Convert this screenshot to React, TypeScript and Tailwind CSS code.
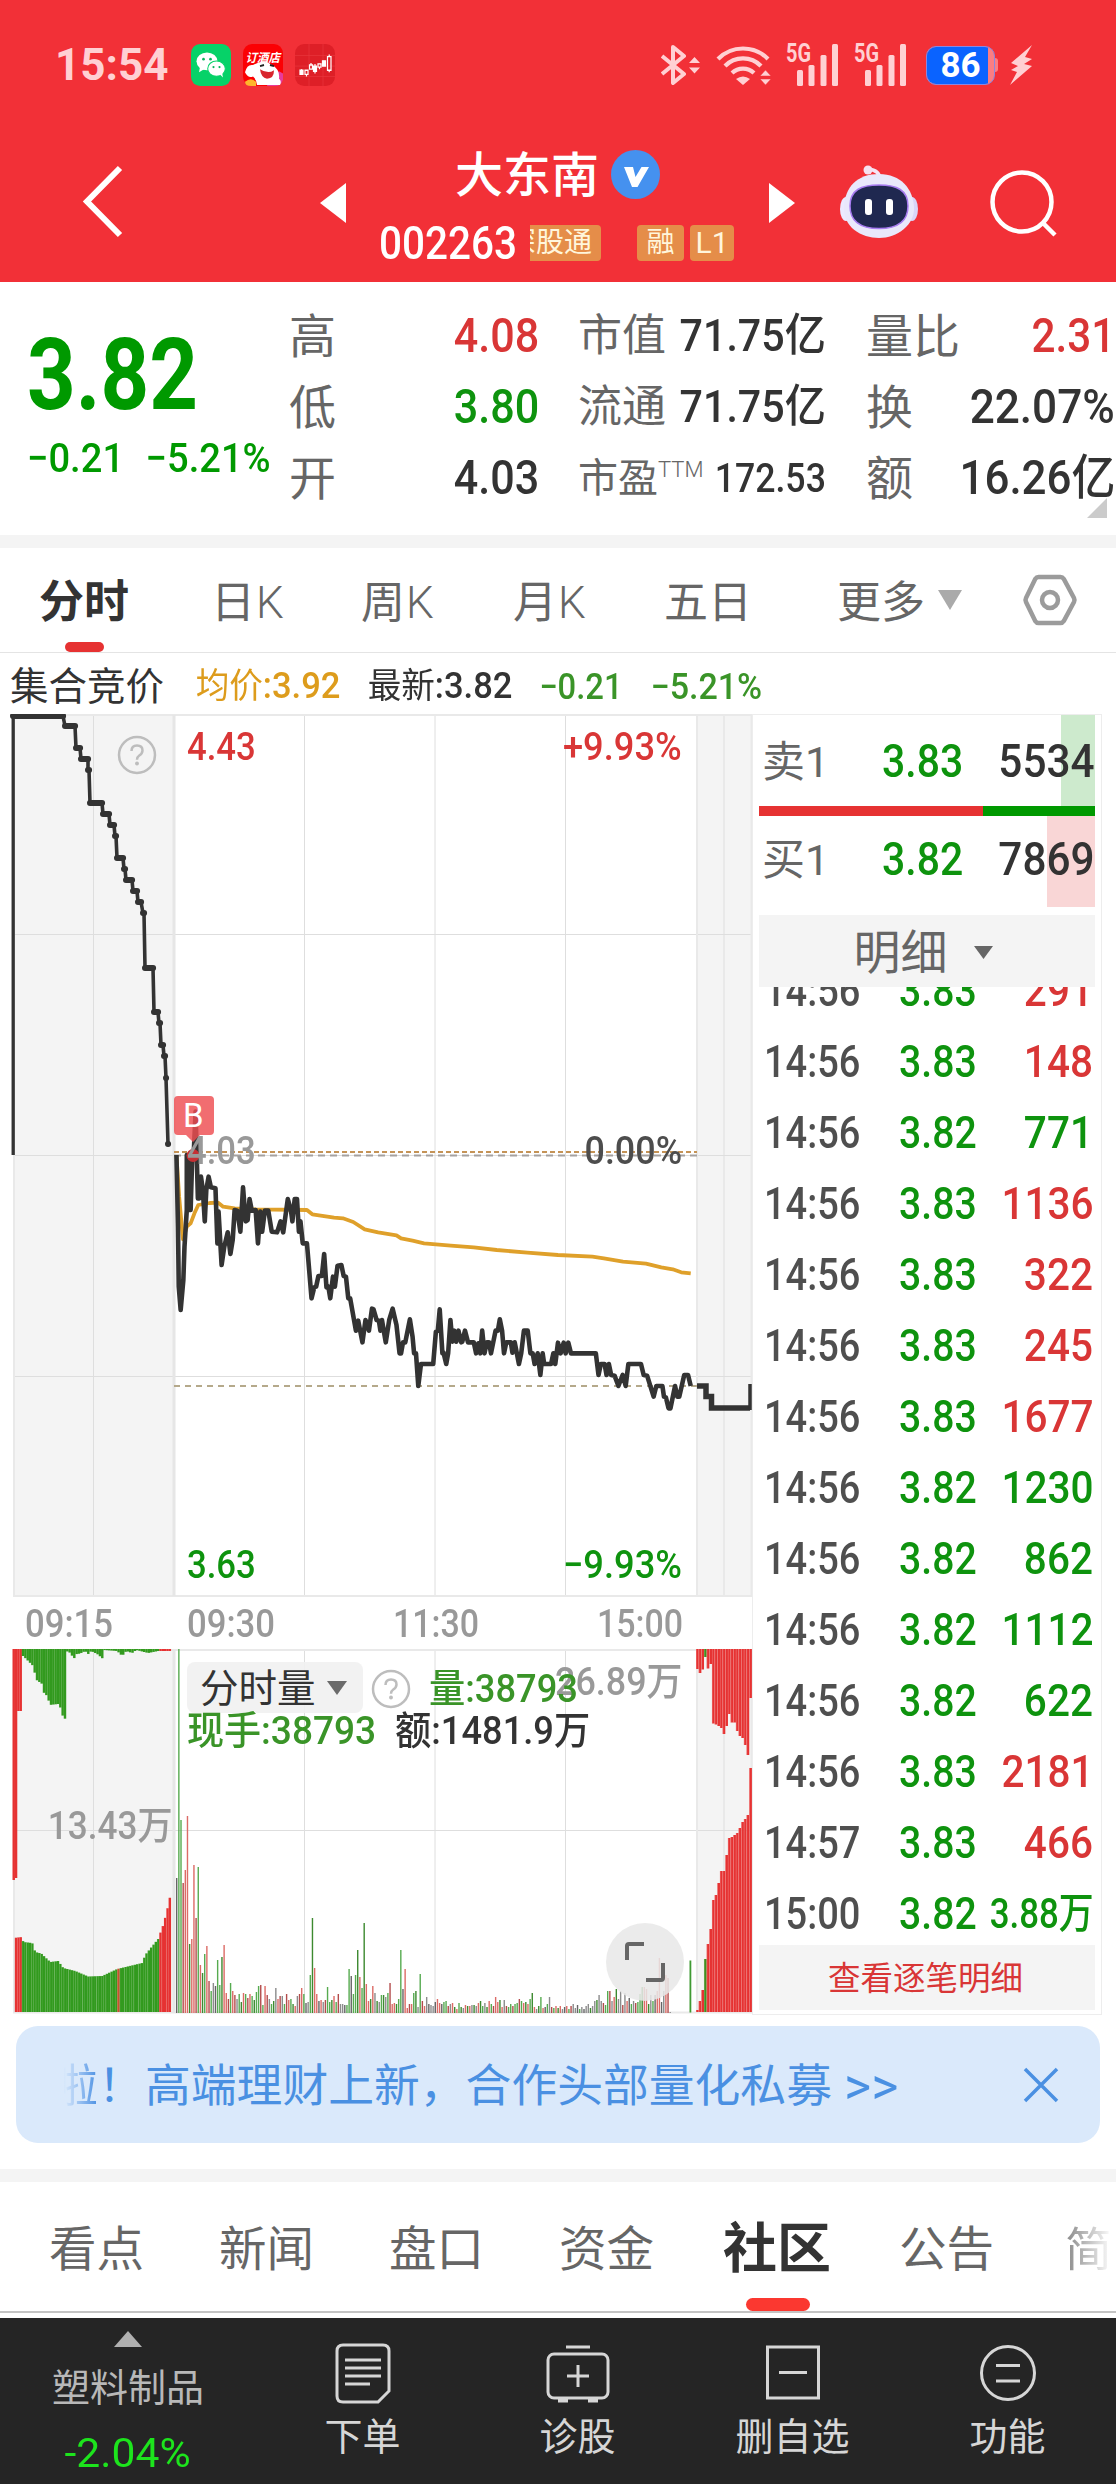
import React from "react";

const FONT = "font-['Roboto','Noto_Sans_CJK_SC',sans-serif]";

/* ---------- header ---------- */

function Signal() {
  return (
    <svg width="54" height="42" viewBox="0 0 54 42" fill="#ffd0d3" className="overflow-visible">
      <text x="0" y="18" fontSize="25" fontWeight="700" textLength="25" lengthAdjust="spacingAndGlyphs">
        5G
      </text>
      <rect x="11" y="26" width="6" height="16" rx="1.5" />
      <rect x="22.500" y="21" width="6" height="21" rx="1.5" />
      <rect x="34.500" y="11" width="6" height="31" rx="1.5" />
      <rect x="46" y="0" width="6" height="42" rx="1.5" />
    </svg>
  );
}

function StatusBar() {
  return (
    <div className="flex h-[130px] items-center pl-[55px]">
      <span className="w-[136px] text-[44px] leading-none font-bold text-[#ffd0d3]">15:54</span>
      <svg width="40" height="42" viewBox="0 0 40 40" preserveAspectRatio="none" className="mr-3">
        <rect width="40" height="40" rx="9" fill="#06d268" />
        <ellipse cx="16" cy="16.500" rx="10.500" ry="8.500" fill="#fff" />
        <path d="M9 22l-1 5 5-3z" fill="#fff" />
        <ellipse cx="25.500" cy="23.500" rx="8.800" ry="7.300" fill="#fff" stroke="#06d268" strokeWidth="1" />
        <path d="M29 29l3 3-1-5z" fill="#fff" />
        <circle cx="12.500" cy="14.500" r="1.300" fill="#06b55a" />
        <circle cx="19.500" cy="14.500" r="1.300" fill="#06b55a" />
        <circle cx="22.500" cy="22" r="1.100" fill="#06b55a" />
        <circle cx="28.500" cy="22" r="1.100" fill="#06b55a" />
      </svg>
      <svg width="40" height="42" viewBox="0 0 40 40" preserveAspectRatio="none" className="mr-3">
        <rect width="40" height="40" rx="9" fill="#fb0004" />
        <path d="M24 40q2-10 12-14l4 2v6q-2 6-8 6z" fill="#e83a9b" />
        <path d="M2 27q2-8 8-7q11-6 19 0q8 4 7 13q3 2 1 6H14q-1-6-4-8q-5 2-8-4z" fill="#fff" />
        <path d="M17 24q8 5 14 1q0 8-7 8q-6-1-7-9z" fill="#d8262d" />
        <path d="M17 21l4-1M27 20l4 1" stroke="#222" strokeWidth="1.800" />
        <path d="M2 36q6-5 11 0v4H8q-6 0-6-4z" fill="#ffb52c" />
        <text x="2.500" y="17.500" fontSize="11.500" fontWeight="700" fontStyle="italic" fill="#fff">
          订酒店
        </text>
      </svg>
      <svg width="40" height="42" viewBox="0 0 40 40" preserveAspectRatio="none">
        <rect width="40" height="40" rx="9" fill="#de1f27" />
        <path d="M0 11h40M0 21h40M0 31h40M14 0v40M28 0v40" stroke="#ea3a40" strokeWidth=".6" />
        <g fill="#fff" stroke="#fff" strokeWidth="1.200">
          <path d="M5 25h3v4H5zM18.500 21h3v5h-3zM27.500 16h3v5h-3z" />
          <path d="M10 25h3v4h-3zM14.500 20h3v4h-3zM23 19h3v3h-3zM32.500 12h3.500v13h-3.500z" fill="none" />
          <path d="M6.500 24v1M11.500 29v2M16 18v2M20 19v9M24.500 22v2M34.200 10v2M34.200 25v2" />
        </g>
      </svg>

      <div className="ml-[326px] flex items-center">
        <svg width="39" height="42" viewBox="0 0 39 42" fill="none" stroke="#ffd0d3" strokeWidth="4">
          <path d="M1 12l22 18-11 9V3l11 9L1 30" strokeLinejoin="round" />
          <path d="M28 19l5.500-6 5.500 6zM28 23.500l5.500 6 5.500-6z" fill="#ffd0d3" stroke="none" />
        </svg>
        <svg width="56" height="42" viewBox="0 0 56 42" fill="none" stroke="#ffd0d3" strokeWidth="4.200" className="ml-4">
          <path d="M2 15a35 35 0 0 1 50 0" />
          <path d="M9 22a25 25 0 0 1 36 0" />
          <path d="M16 29a16 16 0 0 1 22 0" />
          <path d="M20 35q7-5 14 0l-7 6z" fill="#ffd0d3" stroke="none" />
          <path d="M44 32l5.500-6 5.500 6zM44 35l5.500 6 5.500-6z" fill="#ffd0d3" stroke="#f23037" strokeWidth=".5" />
        </svg>
        <div className="ml-[14px] flex gap-[14px]">
          <Signal />
          <Signal />
        </div>
        <div className="relative ml-[18px] flex h-[39px] w-[69px] items-center justify-center overflow-hidden rounded-[10px] border border-[#8a86e0] bg-[#fb7d82]">
          <div className="absolute inset-y-0 left-0 w-[61px] bg-[#0a63ff]" />
          <span className="relative text-[35px] leading-none font-bold text-white">86</span>
        </div>
        <div className="h-[14px] w-[3px] rounded-r bg-[#fb7d82]" />
        <svg width="24" height="42" viewBox="0 0 24 42" className="ml-[11px]" fill="#ffd0d3">
          <path d="M23 1L2 19l7 3-7 4 6 2-7 13 22-19-8-2 8-5-7-2z" />
        </svg>
      </div>
    </div>
  );
}

function NavBar() {
  return (
    <div className="flex h-[152px] items-start text-white">
      <svg width="46" height="76" viewBox="0 0 46 76" className="mt-[33px] ml-[80px]" fill="none" stroke="#fff" strokeWidth="6">
        <path d="M40 5L7 38.500 40 72" />
      </svg>
      <svg width="26" height="40" viewBox="0 0 26 40" className="mt-[53px] ml-[194px]" fill="#fff">
        <path d="M26 0v40L0 20z" />
      </svg>
      <div className="ml-[33px] w-[360px]">
        <div className="flex h-[88px] items-center pl-[76px]">
          <span className="relative top-[2px] text-[48px] leading-none font-medium">大东南</span>
          <svg width="49" height="49" viewBox="0 0 49 49" className="ml-[12px]">
            <circle cx="24.500" cy="24.500" r="24.500" fill="#4591ef" />
            <path d="M13 17h9l2.500 10 6-10H38L26.500 37H21z" fill="#fff" />
          </svg>
        </div>
        <div className="flex h-[50px] items-center text-[#fff6dc]">
          <span className="w-[151px] origin-left scale-x-[.88] text-[46px] leading-none font-medium text-white">002263</span>
          <span className="flex h-[36px] w-[71px] items-center justify-end overflow-hidden rounded-r-[4px] bg-[#e58d49] pr-[9px] text-[28px] leading-none whitespace-nowrap">
            深股通
          </span>
          <span className="ml-[36px] flex h-[36px] w-[47px] items-center justify-center rounded-[4px] bg-[#e58d49] text-[28px] leading-none">融</span>
          <span className="ml-[6px] flex h-[36px] w-[44px] items-center justify-center rounded-[4px] bg-[#e58d49] text-[30px] leading-none">L1</span>
        </div>
      </div>
      <svg width="26" height="40" viewBox="0 0 26 40" className="mt-[53px] ml-[30px]" fill="#fff">
        <path d="M0 0v40l26-20z" />
      </svg>
      <svg width="80" height="76" viewBox="0 0 80 76" className="mt-[33px] ml-[44px]">
        <path d="M41 17q0-10-12-11" fill="none" stroke="#f6e4f5" strokeWidth="3.500" />
        <circle cx="29" cy="7" r="4.500" fill="#f6e0f0" />
        <ellipse cx="7" cy="46" rx="6" ry="12" fill="#eceaff" />
        <ellipse cx="73" cy="46" rx="6" ry="12" fill="#d9d5f8" />
        <path d="M40 11C62 11 74 26 75 44S58 75 40 75 4 64 5 44 18 11 40 11z" fill="#e9e8fb" />
        <path d="M40 22C58 22 69 27 69 43S58 65.500 40 65.500 11 59 11 43 22 22 40 22z" fill="#1f2850" stroke="#a77cf0" strokeWidth="1.500" />
        <rect x="26" y="36" width="7" height="16" rx="3" fill="#fff" />
        <rect x="47" y="36" width="7" height="16" rx="3" fill="#fff" />
      </svg>
      <svg width="70" height="72" viewBox="0 0 70 72" className="mt-[38px] ml-[69px]" fill="none" stroke="#fff" strokeWidth="4.500">
        <circle cx="34" cy="34" r="29.500" />
        <path d="M55 55l12 12" />
      </svg>
    </div>
  );
}

/* ---------- quote summary ---------- */

function Quote() {
  const label = "leading-[73px] text-[#666]";
  return (
    <div className="relative flex h-[253px] pt-[18px] font-medium text-[#333]">
      <div className="w-[289px] pl-[27px] text-[#009900]">
        <div className="mt-[25px] h-[100px] origin-left scale-x-[.85] text-[100px] leading-[100px] font-bold">3.82</div>
        <div className="mt-[9px] flex h-[48px] origin-left scale-x-[.93] text-[41px] leading-[48px] whitespace-nowrap">
          <span className="w-[134px]">−0.21</span>
          <span>−5.21%</span>
        </div>
      </div>
      <div className="w-[250px]">
        {[
          ["高", "4.08", "text-[#d93636]"],
          ["低", "3.80", "text-[#0e930e]"],
          ["开", "4.03", "text-[#333]"],
        ].map(([k, v, c]) => (
          <div key={k} className="flex h-[71px] justify-between">
            <span className={label + " text-[47px] font-normal"}>{k}</span>
            <span className={"origin-right scale-x-[.88] text-[49px] leading-[72px] " + c}>{v}</span>
          </div>
        ))}
      </div>
      <div className="ml-[39px] w-[248px]">
        {[
          ["市值", "71.75亿"],
          ["流通", "71.75亿"],
        ].map(([k, v]) => (
          <div key={k} className="flex h-[71px] justify-between">
            <span className={label + " text-[44px] font-normal"}>{k}</span>
            <span className="-ml-4 origin-right scale-x-[.915] text-[45px] leading-[72px]">{v}</span>
          </div>
        ))}
        <div className="flex h-[71px] justify-between whitespace-nowrap">
          <span className={label + " flex text-[40px] font-normal"}>
            市盈
            <span className="mt-[-9px] text-[22px] font-light">TTM</span>
          </span>
          <span className="-ml-6 origin-right scale-x-[.87] text-[41px] leading-[72px]">172.53</span>
        </div>
      </div>
      <div className="ml-[40px] w-[249px]">
        {[
          ["量比", "2.31", "scale-x-[.88] text-[#d93636]"],
          ["换", "22.07%", "scale-x-[.92]"],
          ["额", "16.26亿", "scale-x-[.915]"],
        ].map(([k, v, c]) => (
          <div key={k} className="flex h-[71px] justify-between whitespace-nowrap">
            <span className={label + " text-[47px] font-normal"}>{k}</span>
            <span className={"origin-right text-[48px] leading-[72px] " + c}>{v}</span>
          </div>
        ))}
      </div>
      <svg width="20" height="20" viewBox="0 0 20 20" className="absolute top-[216px] left-[1087px]">
        <path d="M20 0v20H0z" fill="#cbcbcb" />
      </svg>
    </div>
  );
}

/* ---------- period tabs and legend ---------- */

function PeriodTabs() {
  const item = "shrink-0 text-[44px] leading-[110px] text-[#666]";
  const k = <span className="ml-[1px] font-light">K</span>;
  return (
    <div className="relative flex h-[105px] border-b border-[#e4e4e4] pl-[39px]">
      <span className="w-[172px] text-[45px] leading-[110px] font-bold text-[#333]">分时</span>
      <span className={item + " w-[150px]"}>日{k}</span>
      <span className={item + " w-[152px]"}>周{k}</span>
      <span className={item + " w-[151px]"}>月{k}</span>
      <span className={item + " w-[173px]"}>五日</span>
      <span className={item + " w-[100px]"}>更多</span>
      <svg width="26" height="22" viewBox="0 0 26 22" className="mt-[41px]">
        <path d="M1 1h24L13 21z" fill="#aaa" />
      </svg>
      <svg width="56" height="56" viewBox="0 0 56 56" className="mt-[24px] ml-[59px]" fill="none" stroke="#9b9b9b" strokeWidth="4.500">
        <path d="M16.500 5h22q2 0 3.300 2L52 26q1 2 0 4L41.800 49q-1.300 2-3.300 2h-22q-2 0-3.300-2L4 30q-1-2 0-4L13.200 7q1.300-2 3.300-2z" />
        <circle cx="28" cy="28" r="8" />
      </svg>
      <div className="absolute bottom-0 left-[65px] h-[10px] w-[39px] rounded-full bg-[#e63232]" />
    </div>
  );
}

function Legend() {
  return (
    <div className="flex h-[61px] items-center pt-[6px] whitespace-nowrap text-[#333]">
      <span className="w-[187px] pl-[10px] text-[38.500px]">集合竞价</span>
      <span className="w-[172px] origin-left scale-x-[.96] pl-[9px] text-[36px] text-[#dd9c1c]">
        <span className="text-[35px]">均价</span>
        <b className="font-medium">:3.92</b>
      </span>
      <span className="w-[172px] origin-left scale-x-[.96] pl-[9px]">
        <span className="text-[35px]">最新</span>
        <b className="text-[36px] font-medium">:3.82</b>
      </span>
      <span className="w-[111px] origin-left scale-x-[.91] pl-[9px] text-[36px] font-medium text-[#3a9428]">−0.21</span>
      <span className="origin-left scale-x-[.945] pl-[9px] text-[36px] font-medium text-[#3a9428]">−5.21%</span>
    </div>
  );
}

/* ---------- charts ---------- */

const AUCTION: number[][] = [
  [13, 63, 716], [65, 75, 726], [76, 80, 748], [81, 88, 759], [88, 89, 770], [90, 102, 803], [103, 109, 814],
  [110, 114, 825], [115, 116, 836], [117, 123, 858], [124, 125, 869], [126, 132, 880], [133, 137, 891],
  [138, 141, 902], [143, 144, 913], [145, 153, 968], [154, 158, 1012], [159, 160, 1023], [161, 163, 1045],
  [164, 165, 1056], [166, 166, 1078], [168, 168, 1144],
];

const PRICE =
  "43,225 47,440 49,620 54,690 61,600 64,500 70,390 70,225 72,390 74,225 76,390 80,390 84,240 88,225 93,95 96,225 99,355 103,355 107,290 112,330 117,424 121,330 127,290 133,322 145,325 150,490 153,395 161,555 168,500 177,457 184,522 190,480 195,390 202,392 210,455 217,322 224,424 229,420 234,357 240,392 250,390 256,490 262,395 267,455 274,392 283,392 292,455 306,457 315,424 322,457 334,357 342,390 346,424 352,357 358,357 363,455 367,424 373,490 384,490 396,655 403,622 408,620 414,588 423,588 429,522 435,622 440,620 445,655 452,590 457,620 464,557 474,555 480,588 486,590 492,655 497,655 512,752 518,722 529,787 537,720 546,752 554,686 558,688 566,720 572,722 576,752 580,720 590,787 599,720 608,686 618,735 626,820 630,820 635,787 641,787 653,718 660,770 664,820 669,820 675,918 682,852 714,852 721,755 726,752 731,688 738,820 741,818 748,852 753,820 759,720 764,785 769,752 774,785 780,752 787,787 790,785 797,752 805,787 820,787 826,820 832,790 837,820 842,752 848,820 854,787 860,787 865,820 877,752 883,752 888,718 894,752 899,820 905,787 917,787 921,818 927,787 938,852 944,820 951,752 961,752 968,820 974,820 979,852 987,820 994,885 1000,820 1004,852 1022,852 1028,820 1033,852 1040,788 1047,820 1055,788 1060,820 1067,788 1074,820 1139,820 1146,885 1152,852 1162,852 1167,885 1173,852 1179,885 1188,887 1198,918 1209,885 1217,918 1224,852 1257,852 1264,885 1273,887 1290,950 1297,918 1313,918 1317,950 1322,952 1329,985 1334,985 1346,918 1352,950 1357,950 1370,885 1380,885 1387,918";

const AVERAGE =
  "43,225 50,350 60,478 70,440 80,430 90,400 100,375 130,369 152,368 165,380 195,385 250,388 384,390 398,403 455,413 478,415 505,426 535,448 570,457 618,466 630,475 660,482 690,490 760,497 820,502 880,510 960,518 1040,525 1130,530 1160,535 1210,545 1270,551 1310,562 1340,568 1362,577 1387,580";

const GRID_X = [93.5, 304.5, 435, 565.5, 724];

function Question({ className }: { className: string }) {
  return (
    <svg width="40" height="40" viewBox="0 0 40 40" className={className} fill="none" stroke="#bdbdbd" strokeWidth="2.500">
      <circle cx="20" cy="20" r="18" />
      <path d="M14.500 16q0-5.500 5.500-5.500t5.500 5q0 3-3.500 5.200q-2 1.300-2 4" />
      <circle cx="20" cy="28.500" r="1.200" fill="#bdbdbd" stroke="#bdbdbd" strokeWidth="1.500" />
    </svg>
  );
}

function PriceChart() {
  return (
    <div className="relative h-[884px] text-[39px] leading-none font-medium">
      <svg width="752" height="884" viewBox="0 714 752 884" className="block">
        <rect x="13" y="715" width="162" height="881" fill="#f4f4f4" />
        <rect x="697" y="715" width="55" height="881" fill="#f4f4f4" />
        <g stroke="#dedede">
          <path d="M13 934.500H752M13 1155.500H752M13 1376.500H752" />
          {GRID_X.map((x) => (
            <path key={x} d={`M${x} 715V1596`} />
          ))}
        </g>
        <path d="M13 715H752M13 1596H752M14 715V1596M697 715V1596M751.500 715V1596" stroke="#e9e9e9" strokeWidth="2" />
        <path d="M174 715V1596" stroke="#e6e6e6" strokeWidth="3" />
        <path d="M13.200 1155V716" stroke="#333" strokeWidth="3.300" />
        <polyline
          points={AUCTION.map(([a, b, y]) => `${a},${y} ${b},${y}`).join(" ")}
          fill="none"
          stroke="#333"
          strokeWidth="3.600"
          strokeLinejoin="round"
        />
        <path
          d={AUCTION.map(([a, b, y]) => `M${a} ${y}H${b + 0.1}`).join("")}
          stroke="#333"
          strokeWidth="6"
          strokeLinecap="round"
        />
        <path d="M174 1152H697" stroke="#c59356" strokeWidth="2" strokeDasharray="5 3" />
        <path d="M174 1155.500H697" stroke="#a5a1a0" strokeWidth="2" strokeDasharray="7 5" />
        <path d="M174 1386H697" stroke="#b5a98b" strokeWidth="2" strokeDasharray="6 5" />
        <g transform="translate(160 1080) scale(.38265 .33333)" fill="none" strokeLinejoin="round">
          <polyline points={AVERAGE} stroke="#dfa02a" strokeWidth="3.800" vectorEffect="non-scaling-stroke" />
          <polyline points={PRICE} stroke="#333" strokeWidth="4.600" vectorEffect="non-scaling-stroke" />
        </g>
        <path d="M697 1386H706V1396.500H711.500V1408H750" fill="none" stroke="#333" strokeWidth="5.500" />
        <path d="M750 1410V1384" stroke="#333" strokeWidth="3.500" />
        <circle cx="193" cy="1155.500" r="6.500" fill="#c52f33" />
        <path d="M178 1096H210a4 4 0 0 1 4 4V1131a4 4 0 0 1-4 4H200L193 1142 186 1135H178a4 4 0 0 1-4-4V1100a4 4 0 0 1 4-4z" fill="#ee4d50" fillOpacity=".82" />
      </svg>
      <span className="absolute top-[385px] left-[183px] text-[33px] font-normal text-white">B</span>
      <span className="absolute top-[14px] left-[187px] origin-left scale-x-[.89] text-[#d93636]">4.43</span>
      <span className="absolute top-[14px] right-[70px] origin-right scale-x-[.93] text-[#d93636]">+9.93%</span>
      <span className="absolute top-[418px] left-[187px] origin-left scale-x-[.89] text-[#999]">4.03</span>
      <span className="absolute top-[418px] right-[70px] origin-right scale-x-[.92] text-[#4d4d4d]">0.00%</span>
      <span className="absolute top-[832px] left-[187px] origin-left scale-x-[.89] text-[#0e930e]">3.63</span>
      <span className="absolute top-[832px] right-[70px] origin-right scale-x-[.93] text-[#0e930e]">−9.93%</span>
      <Question className="absolute top-[21px] left-[117px]" />
    </div>
  );
}

function TimeAxis() {
  return (
    <div className="flex h-[51px] pl-[25px] text-[39px] leading-[53px] font-medium text-[#999]">
      <span className="w-[162px] origin-left scale-x-[.89]">09:15</span>
      <span className="w-[206px] origin-left scale-x-[.89]">09:30</span>
      <span className="w-[204px] origin-left scale-x-[.87]">11:30</span>
      <span className="origin-left scale-x-[.87]">15:00</span>
    </div>
  );
}

const RED = "#e63232";
const GREEN = "#329a1e";

/* outline of the resting volume before the open: x, top edge */
const LEFT_PROFILE = [
  [13, 1938], [22, 1937], [23, 1942], [32, 1943], [35, 1952], [41, 1953.500], [50, 1962], [58, 1961], [63, 1968], [75, 1971],
  [88, 1976.500], [102, 1976], [117, 1969], [142, 1963], [145, 1955], [153, 1945], [158, 1939], [163, 1925], [166, 1914], [170, 1896],
];
const LEFT_HANG = [
  [22, 7], [33, 18], [34, 30], [41, 35], [42, 43], [47, 48], [48, 56], [57, 55], [60, 60], [61, 66], [64, 70], [64.500, 2],
  [68, 3], [71, 7], [74, 10], [76, 3], [78, 5], [84, 2], [87, 5], [90, 2], [96, 5], [102, 10], [103, 1], [116, 2], [121, 7], [125, 2],
  [131, 4], [135, 1], [147, 4], [157, 2], [170, 2],
];

function sample(points: number[][], x: number) {
  for (let i = 1; i < points.length; i++) {
    const [x0, y0] = points[i - 1];
    const [x1, y1] = points[i];
    if (x <= x1) return y0 + ((y1 - y0) * Math.max(0, x - x0)) / (x1 - x0 || 1);
  }
  return points[points.length - 1][1];
}

const RIGHT_HANG = [20, 24, 20.500, 8, 19.500, 15, 74.500, 75.500, 77, 79, 85, 77, 65, 73.500, 73.500, 82, 87, 89, 96, 106, 49];
const RIGHT_RISE = [2, 11, 22, 53, 68, 83, 112, 117, 129, 141, 141, 157, 174, 175, 177, 179, 184, 190, 193, 197, 244];

/* one-minute volumes as pixel height plus colour: r, g, k (grey) */
const VOLUMES =
  "135k 364g 193g 130r 143r 197r 69g 74r 148r 95r 146g 48r 40g 59g 67r 32r 22g 30k 27k 53g 28g 56g 68r 20r 14r 30g 22r 18r 14k 19g 11g 20r 19g 15r 19r 17g 13g 21g 27g 28r 8g 27r 18r 14k 9g 12g 25k 14r 17r 17k 9g 19r 13r 14g 9g 7r 17k 19r 25r 19g 10k 11k 38g 95g 45r 19r 12k 13r 11k 13r 26g 11g 13g 17r 11g 19r 9k 9k 8k 8g 44g 37k 19g 38g 63g 36r 25g 90g 29r 12r 14g 27r 20k 12g 11k 18g 18g 16k 20g 30r 9r 10r 9g 14g 63g 24k 44r 5r 9r 9r 20g 22g 6k 39g 12r 7r 16k 9k 8k 7k 11k 14r 10r 9k 11g 12g 7r 9k 10r 6g 4r 10g 6g 5k 8r 7g 7r 8k 8g 7k 10r 12g 7g 10k 6g 12r 9g 7r 16r 11r 13g 6r 13k 7r 6g 9g 7r 9g 10g 14r 12g 10r 11g 9r 14g 20g 6r 4k 7g 16g 5r 6k 9g 16k 6r 5g 7r 5g 7r 4k 6k 7r 4g 7r 9k 5k 8k 4g 6k 4k 7k 9k 5g 7k 12k 13g 18k 12k 10r 8g 22g 22r 12k 16r 24g 14k 22k 8r 20k 12r 15k 9g 12k 10r 11g 19g 26g 26r 24r 9g 18k 12g 18k 22r 55r 11k 22k 38r 35r 1k";

const BAR_FILL: Record<string, string> = { r: "#dc6b66", g: "#57ab50", k: "#8c8c8c" };
const BAR_DARK: Record<string, string> = { r: "#b34c4c", g: "#3d8a30", k: "#666" };

function VolumeChart() {
  const left = Array.from({ length: 68 }, (_, i) => 12.500 + i * 2.33);
  return (
    <div className="relative h-[365px] text-[39px] leading-none font-medium whitespace-nowrap">
      <svg width="752" height="365" viewBox="0 1649 752 365" className="block">
        <rect x="13" y="1649" width="162" height="364" fill="#f4f4f4" />
        <rect x="697" y="1649" width="55" height="364" fill="#f4f4f4" />
        <path d={"M13 1830.500H752" + GRID_X.map((x) => `M${x} 1649V2013`).join("")} stroke="#dedede" />
        <path d="M13 1650H752M14 1650V2013M697 1650V2013M751.500 1650V2013M13 2012.500H752" stroke="#e9e9e9" strokeWidth="2" />
        <path d="M174 1650V2013" stroke="#e6e6e6" strokeWidth="3" />
        {left.map((x, i) => {
          const hang = x < 16.500 ? 231 - i * 2 : x < 21.500 ? 62 : sample(LEFT_HANG, x);
          const top = sample(LEFT_PROFILE, x + 1);
          const red = x < 21.500 || x > 157;
          return (
            <g key={i} fill={red ? RED : GREEN}>
              <rect x={x} y="1649" width="2.450" height={hang} />
              {i > 0 && <rect x={x} y={top} width="2.450" height={2012 - top} fill={i === 45 ? "#c9502e" : undefined} />}
              {i % 2 === 0 && i > 0 && <rect x={x} y={top} width=".5" height={2012 - top} fill="#fff" fillOpacity=".22" />}
            </g>
          );
        })}
        {RIGHT_HANG.map((h, i) => {
          const x = 696 + i * 2.660;
          const rise = RIGHT_RISE[i];
          return (
            <g key={i} fill={i === 3 ? "#3f8f20" : RED}>
              <rect x={x} y="1649" width="2.700" height={h} />
              <rect x={x} y={2012 - rise} width="2.700" height={rise} />
              <rect x={x} y={2012 - rise} width=".6" height={rise} fill="#fff" fillOpacity=".3" />
              <rect x={x} y="1649" width=".6" height={h} fill="#fff" fillOpacity=".3" />
            </g>
          );
        })}
        {VOLUMES.split(" ").map((v, i) => {
          const h = parseInt(v);
          const c = v.slice(-1);
          return <rect key={i} x={176 + i * 2.155} y={2013 - h} width="1.400" height={h} fill={(i % 3 ? BAR_FILL : BAR_DARK)[c]} />;
        })}
        <rect x="689.500" y="1960.500" width="1.800" height="52" fill="#3f9a33" />
        <circle cx="645" cy="1962" r="39" fill="#e8e8e8" fillOpacity=".86" />
        <path d="M627 1960V1946q0-2 2-2H644M663 1963V1978q0 2-2 2H646" fill="none" stroke="#666" strokeWidth="4" />
      </svg>
      <span className="absolute top-[158px] right-[580px] origin-right scale-x-[.9] text-[#999]">13.43万</span>
      <div className="absolute top-[13px] left-[187px] flex h-[51px] w-[176px] items-center rounded-[8px] bg-[#f1f1f1]/90 pt-[3px] pl-[13px] text-[38.500px] font-normal text-[#333]">
        分时量
        <svg width="20" height="14" viewBox="0 0 20 14" className="-mt-[3px] ml-[11px]">
          <path d="M0 0h20L10 14z" fill="#6b6b6b" />
        </svg>
      </div>
      <Question className="absolute top-[20px] left-[371px]" />
      <span className="absolute top-[14px] right-[70px] origin-right scale-x-[.92] text-[#999]">26.89万</span>
      <span className="absolute top-[21px] left-[429px] origin-left scale-x-[.93] text-[#3a9428]">量:38793</span>
      <span className="absolute top-[63px] left-[187px] origin-left scale-x-[.95] text-[#3a9428]">现手:38793</span>
      <span className="absolute top-[63px] left-[395px] origin-left scale-x-[.93] text-[#333]">额:1481.9万</span>
    </div>
  );
}

/* ---------- order book ---------- */

const TRADES: [string, string, string, boolean][] = [
  ["14:56", "3.83", "291", true],
  ["14:56", "3.83", "148", true],
  ["14:56", "3.82", "771", false],
  ["14:56", "3.83", "1136", true],
  ["14:56", "3.83", "322", true],
  ["14:56", "3.83", "245", true],
  ["14:56", "3.83", "1677", true],
  ["14:56", "3.82", "1230", false],
  ["14:56", "3.82", "862", false],
  ["14:56", "3.82", "1112", false],
  ["14:56", "3.82", "622", false],
  ["14:56", "3.83", "2181", true],
  ["14:57", "3.83", "466", true],
  ["15:00", "3.82", "3.88万", false],
];

function Level({ name, price, size, depth, className }: { name: string; price: string; size: string; depth: string; className: string }) {
  return (
    <div className={"relative flex h-[91px] shrink-0 items-center pl-[3px] text-[46px] leading-none font-medium " + className}>
      <div className={"absolute right-0 " + depth} />
      <span className="w-[120px] pt-[2px] text-[43px] font-normal text-[#666]">{name}</span>
      <span className="origin-left scale-x-[.89] text-[#0e930e]">{price}</span>
      <span className="relative ml-auto origin-right scale-x-[.92] text-[#333]">{size}</span>
    </div>
  );
}

function OrderBook() {
  return (
    <div className="flex h-[1301px] w-[350px] flex-col border border-[#ededed] px-[6px]">
      <Level name="卖1" price="3.83" size="5534" className="pt-[1px]" depth="top-0 h-[91px] w-[34px] bg-[#cdeacd]" />
      <div className="flex h-[10px]">
        <div className="w-2/3 bg-[#e63232]" />
        <div className="w-1/3 bg-[#009900]" />
      </div>
      <Level name="买1" price="3.82" size="7869" className="pb-[5px]" depth="top-0 h-[91px] w-[48px] bg-[#f9d6d6]" />
      <div className="mt-[8px] flex h-[72px] shrink-0 items-center justify-center bg-[#f4f4f4] pt-[2px] pr-[8px] text-[47px] leading-none text-[#666]">
        明细
        <svg width="19" height="13" viewBox="0 0 19 13" className="ml-[26px]">
          <path d="M0 0h19L9.500 13z" fill="#666" />
        </svg>
      </div>
      <div className="h-[958px] shrink-0 overflow-hidden text-[45px] leading-[71px] font-medium">
        <div className="-mt-[32px]">
          {TRADES.map(([t, p, v, up], i) => (
            <div key={i} className="flex h-[71px] pl-[5px] whitespace-nowrap">
              <span className="w-[135px] shrink-0 origin-left scale-x-[.845] text-[#4f4f4f]">{t}</span>
              <span className="w-[80px] shrink-0 origin-left scale-x-[.87] text-[#0e930e]">{p}</span>
              <span className="flex min-w-0 grow justify-end">
                <span
                  className={
                    "shrink-0 origin-right pr-[2px] " +
                    (v.includes("万") ? "scale-x-[.83] text-[42px] " : "scale-x-[.9] ") +
                    (up ? "text-[#d93636]" : "text-[#0e930e]")
                  }
                >
                  {v}
                </span>
              </span>
            </div>
          ))}
        </div>
      </div>
      <div className="h-[65px] shrink-0 bg-[#f4f4f4] pr-[3px] text-center text-[32.500px] leading-[68px] text-[#d93636]">查看逐笔明细</div>
    </div>
  );
}

/* ---------- lower part ---------- */

function Banner() {
  return (
    <div className="mx-4 mt-3 flex h-[117px] items-center rounded-[22px] bg-[#dae9fb] pt-[4px] pl-[48px] text-[45.800px] leading-none whitespace-nowrap text-[#4a90e2]">
      <div className="flex w-[48px] shrink-0 overflow-hidden">
        <span className="-ml-[12px] bg-gradient-to-r from-[#dae9fb] from-25% to-[#4a90e2] bg-clip-text leading-[60px] text-transparent">啦</span>
      </div>
      <span className="-ml-[14px] w-[47px]">！</span>
      <span>高端理财上新，合作头部量化私募</span>
      <span className="ml-[12px] text-[52px]">&gt;&gt;</span>
      <svg width="36" height="36" viewBox="0 0 36 36" className="mr-[41px] mb-[4px] ml-auto" stroke="#4a90e2" strokeWidth="3.500">
        <path d="M2 2l32 32M34 2L2 34" />
      </svg>
    </div>
  );
}

function SectionTabs() {
  const item = "shrink-0 text-[47.500px] font-normal text-[#666]";
  return (
    <div className="relative flex h-[131px] items-center border-b-2 border-[#c4c4c4] pt-[6px] pl-[49px] leading-[64px] whitespace-nowrap">
      <span className={item + " w-[170px]"}>看点</span>
      <span className={item + " w-[170px]"}>新闻</span>
      <span className={item + " w-[170px]"}>盘口</span>
      <span className={item + " w-[164px]"}>资金</span>
      <span className="w-[176px] shrink-0 text-[54px] font-bold text-[#333]">社区</span>
      <span className={item + " w-[166px]"}>公告</span>
      <span className="shrink-0 bg-gradient-to-r from-[#888] to-white bg-clip-text text-[47px] text-transparent">简</span>
      <div className="absolute bottom-0 left-[746px] h-[13px] w-[64px] rounded-full bg-[#fb3830]" />
    </div>
  );
}

function ToolItem({ label, children }: { label: string; children: React.ReactNode }) {
  return (
    <div className="flex w-[215px] shrink-0 flex-col items-center pt-[22px] pr-[2px]">
      <svg width="66" height="66" viewBox="0 0 66 66" fill="none" stroke="#d6d6d6" strokeWidth="3">
        {children}
      </svg>
      <span className="mt-[12px] text-[38px] leading-none text-[#d6d6d6]">{label}</span>
    </div>
  );
}

function BottomBar() {
  return (
    <div className="mt-[5px] flex h-[166px] bg-[#252525]">
      <div className="flex w-[256px] shrink-0 flex-col items-center pt-[13px]">
        <svg width="28" height="16" viewBox="0 0 28 16">
          <path d="M14 0l14 16H0z" fill="#b0b0b0" />
        </svg>
        <span className="mt-[22px] text-[38px] leading-none text-[#b8b8b8]">塑料制品</span>
        <span className="mt-[26px] scale-x-[1.04] text-[41px] leading-none text-[#1de41d]">-2.04%</span>
      </div>
      <ToolItem label="下单">
        <path d="M13 5H53q6 0 6 6V51L48 62H13q-6 0-6-6V11q0-6 6-6z" />
        <path d="M15 20H51M15 28H51M15 36H51M15 44H40" />
      </ToolItem>
      <ToolItem label="诊股">
        <rect x="3" y="14" width="60" height="44" rx="6" />
        <path d="M21 7H45M33 25V47M22 36H44" />
        <path d="M13 60H23M43 60H53" strokeWidth="5" />
      </ToolItem>
      <ToolItem label="删自选">
        <rect x="7.500" y="7" width="51" height="51" />
        <path d="M19 32.500H47" />
      </ToolItem>
      <ToolItem label="功能">
        <circle cx="33" cy="33" r="26.500" />
        <path d="M21 25.500H45M21 41H45" />
      </ToolItem>
    </div>
  );
}

export default function App() {
  return (
    <div className={"h-[2484px] w-[1116px] overflow-hidden bg-white " + FONT}>
      <div className="h-[282px] bg-[#f23037]">
        <StatusBar />
        <NavBar />
      </div>
      <Quote />
      <div className="h-[13px] bg-[#f4f4f4]" />
      <PeriodTabs />
      <Legend />
      <div className="flex h-[1300px]">
        <div className="w-[752px] shrink-0">
          <PriceChart />
          <TimeAxis />
          <VolumeChart />
        </div>
        <OrderBook />
      </div>
      <Banner />
      <div className="mt-[26px] h-[13px] bg-[#f4f4f4]" />
      <SectionTabs />
      <BottomBar />
    </div>
  );
}
